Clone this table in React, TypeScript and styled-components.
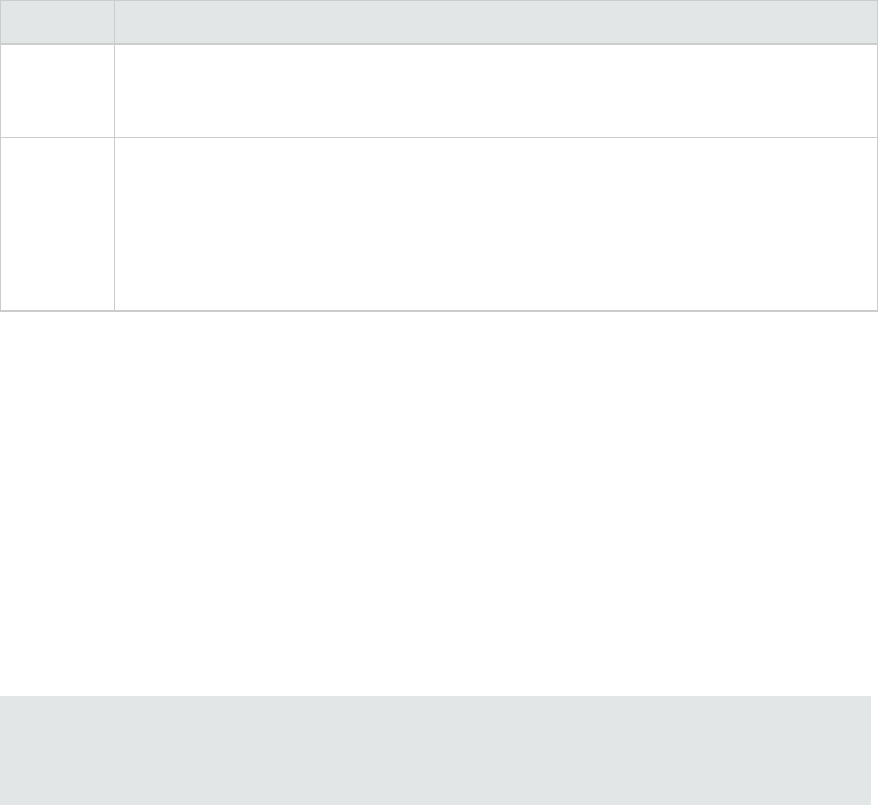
import React from 'react'
import styled, { createGlobalStyle } from 'styled-components'

const Global = createGlobalStyle`
  html, body {
    margin: 0;
    padding: 0;
    background: #fff;
    font-family: "Open Sans", "Liberation Sans", sans-serif;
    font-size: 14px;
    color: #333;
  }
`

const Page = styled.div`
  width: 879px;
  display: flex;
  flex-direction: column;
`

const Table = styled.table`
  width: 878px;
  border-collapse: separate;
  border-spacing: 0;
  border-top: 1px solid #cccccc;
  border-left: 1px solid #cccccc;
  border-right: 1px solid #cccccc;
  border-bottom: 2px solid #cccccc;
  box-sizing: border-box;
  table-layout: fixed;
`

const Th = styled.th<{ $first?: boolean }>`
  box-sizing: border-box;
  height: 44px;
  padding: 0;
  background: #e2e6e6;
  border-bottom: 2px solid #cccccc;
  border-right: ${(p) => (p.$first ? '1px solid #cccccc' : 'none')};
  width: ${(p) => (p.$first ? '114px' : 'auto')};
`

const Td = styled.td<{ $first?: boolean; $h: number; $last?: boolean }>`
  box-sizing: border-box;
  height: ${(p) => p.$h}px;
  padding: 0;
  border-right: ${(p) => (p.$first ? '1px solid #cccccc' : 'none')};
  border-bottom: ${(p) => (p.$last ? 'none' : '1px solid #cccccc')};
  vertical-align: top;
`

const Note = styled.div`
  margin-top: 384px;
  width: 871px;
  height: 120px;
  background: #e2e6e6;
`

const rows = [
  { h: 93, last: false },
  { h: 172, last: true },
]

const App = () => (
  <>
    <Global />
    <Page>
      <Table>
        <thead>
          <tr>
            <Th $first></Th>
            <Th></Th>
          </tr>
        </thead>
        <tbody>
          {rows.map((r, i) => (
            <tr key={i}>
              <Td $first $h={r.h} $last={r.last}></Td>
              <Td $h={r.h} $last={r.last}></Td>
            </tr>
          ))}
        </tbody>
      </Table>
      <Note />
    </Page>
  </>
)

export default App
